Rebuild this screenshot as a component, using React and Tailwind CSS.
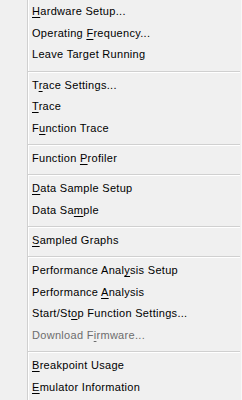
const groups = [
  [
    { pre: '', key: 'H', post: 'ardware Setup...' },
    { pre: 'Operating ', key: 'F', post: 'requency...' },
    { pre: 'Leave Target Running', key: '', post: '' },
  ],
  [
    { pre: 'T', key: 'r', post: 'ace Settings...' },
    { pre: '', key: 'T', post: 'race' },
    { pre: 'F', key: 'u', post: 'nction Trace' },
  ],
  [{ pre: 'Function ', key: 'P', post: 'rofiler' }],
  [
    { pre: '', key: 'D', post: 'ata Sample Setup' },
    { pre: 'Data Sa', key: 'm', post: 'ple' },
  ],
  [{ pre: '', key: 'S', post: 'ampled Graphs' }],
  [
    { pre: 'Performance Anal', key: 'y', post: 'sis Setup' },
    { pre: 'Performance ', key: 'A', post: 'nalysis' },
    { pre: 'Start/St', key: 'o', post: 'p Function Settings...' },
    { pre: 'Download F', key: 'i', post: 'rmware...', disabled: true },
  ],
  [
    { pre: '', key: 'B', post: 'reakpoint Usage' },
    { pre: '', key: 'E', post: 'mulator Information' },
  ],
];

function MenuItem({ item }) {
  return (
    <div
      className={`h-[21.6px] flex items-center pl-[4px] text-[11px] tracking-[0.3px] leading-none whitespace-pre ${
        item.disabled ? 'text-[#6d6d6d]' : 'text-black'
      }`}
    >
      <span>
        {item.pre}
        {item.key && <u className="underline underline-offset-[2px]">{item.key}</u>}
        {item.post}
      </span>
    </div>
  );
}

function Separator() {
  return (
    <div className="h-[8.6px] pt-[5px] pr-[1px]">
      <div className="h-px bg-[#d0d0d0]" />
      <div className="h-px bg-white" />
    </div>
  );
}

export default function App() {
  return (
    <div
      className="w-[242px] h-[400px] overflow-hidden bg-[#f0f0f0] flex"
      style={{ fontFamily: '"Liberation Sans", Arial, sans-serif' }}
    >
      {/* gutter with its two-tone edge */}
      <div className="w-[27px] shrink-0" />
      <div className="w-px shrink-0 bg-[#d0d0d0]" />
      <div className="flex-1 pt-[1px] shadow-[inset_1px_0_0_white] border-r border-[#f8f8f8]">
        {groups.map((group, gi) => (
          <div key={gi}>
            {gi > 0 && <Separator />}
            {group.map((item, ii) => (
              <MenuItem key={ii} item={item} />
            ))}
          </div>
        ))}
      </div>
    </div>
  );
}
